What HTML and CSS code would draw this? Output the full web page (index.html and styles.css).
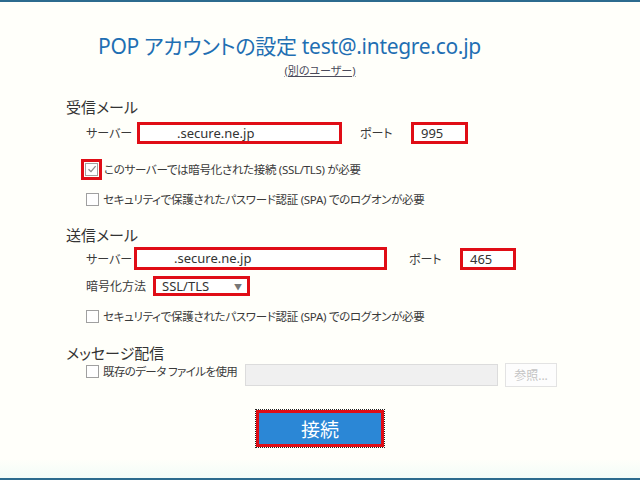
FILE: index.html
```html
<!DOCTYPE html>
<html lang="ja">
<head>
  <meta charset="UTF-8" />
  <title>POP アカウントの設定</title>
  <link rel="stylesheet" href="styles.css">
</head>
<body>

<div class="dialog">
  <h1 class="title">POP アカウントの設定 test@.integre.co.jp</h1>
  <p class="other"><a href="#">(別のユーザー)</a></p>

  <h2 class="group">受信メール</h2>
  <div class="row row-server">
    <span class="label label-server">サーバー</span>
    <div class="box box-in">.secure.ne.jp</div>
    <span class="label label-port">ポート</span>
    <div class="box port port-in">995</div>
  </div>
  <div class="check-row check-first">
    <span class="mark-wrap"><span class="check checked">
      <svg width="10" height="10" viewBox="0 0 10 10"><path d="M1.5 5.2 L4 7.6 L8.6 2.2" fill="none" stroke="#8a8a8a" stroke-width="1.3"/></svg>
    </span></span>
    <span class="check-text">このサーバーでは暗号化された接続 (SSL/TLS) が必要</span>
  </div>
  <div class="check-row">
    <span class="check"></span>
    <span class="check-text">セキュリティで保護されたパスワード認証 (SPA) でのログオンが必要</span>
  </div>

  <h2 class="group group-out">送信メール</h2>
  <div class="row row-server row-out">
    <span class="label label-server2">サーバー</span>
    <div class="box box-out">.secure.ne.jp</div>
    <span class="label label-port">ポート</span>
    <div class="box port port-out">465</div>
  </div>
  <div class="row row-enc">
    <span class="label label-enc">暗号化方法</span>
    <div class="select">SSL/TLS <span class="arrow">▼</span></div>
  </div>
  <div class="check-row check-out">
    <span class="check"></span>
    <span class="check-text">セキュリティで保護されたパスワード認証 (SPA) でのログオンが必要</span>
  </div>

  <h2 class="group group-msg">メッセージ配信</h2>
  <div class="row row-file">
    <span class="check"></span>
    <span class="check-text file-text">既存のデータ ファイルを使用</span>
    <div class="file-input"></div>
    <div class="browse">参照...</div>
  </div>

  <div class="actions">
    <button class="connect">接続</button>
  </div>
</div>

</body>
</html>
```

FILE: styles.css
```css
body {
  margin: 0;
  background: #fffffa;
  font-family: "Noto Sans", "Noto Sans CJK JP", sans-serif;
  font-feature-settings: "palt";
  color: #3a3a3a;
  font-size: 12px;
}
.dialog {
  height: 476px;
  border-top: 2px solid #2c6b8e;
  border-bottom: 2px solid #2c6b8e;
  background: linear-gradient(#fffffa 0, #fffffa 96%, #f2fcf8 100%);
  padding-left: 66px;
  box-sizing: content-box;
}
.title {
  margin: 0;
  padding-top: 31px;
  padding-left: 32px;
  font-size: 21px;
  font-weight: normal;
  line-height: 26px;
  color: #1f6fb3;
  letter-spacing: -0.3px;
}
.other {
  margin: 0;
  margin-top: 4px;
  margin-left: -66px;
  text-align: center;
  line-height: 16px;
  font-size: 11px;
}
.other a {
  color: #4a4a5a;
}
.group {
  margin: 0;
  font-size: 15px;
  font-weight: normal;
  line-height: 20px;
  color: #333;
}
h2.group { margin-top: 18px; }
h2.group-out { margin-top: 15px; }
h2.group-msg { margin-top: 16px; }
.row {
  display: flex;
  align-items: center;
  padding-left: 20px;
}
.row-server {
  height: 23px;
  margin-top: 4px;
}
.row-server.row-out {
  margin-top: 2px;
}
.label {
  font-size: 12px;
}
.label-server { width: 51px; }
.label-server2 { width: 48px; }
.label-port { margin-left: 18px; width: 51px; }
.label-enc { width: 67px; }
.box {
  height: 22px;
  box-sizing: border-box;
  border: 3px solid #e00d16;
  background: #fff;
  font-size: 13px;
  line-height: 16px;
  color: #333;
  padding-left: 37px;
}
.box-in { width: 205px; }
.box-out { width: 253px; height: 23px; margin-right: 4px; }
.port { padding-left: 7px; }
.port-in { width: 57px; }
.port-out { width: 56px; }
.check-row {
  display: flex;
  align-items: center;
  padding-left: 20px;
  height: 22px;
  margin-top: 8px;
}
.check-first {
  margin-top: 14px;
}
.check-out {
  margin-top: 9px;
}
.check {
  width: 11px;
  height: 11px;
  border: 1px solid #a0a0a0;
  background: #fff;
  display: flex;
  align-items: center;
  justify-content: center;
  flex: none;
}
.mark-wrap {
  border: 3px solid #e00d16;
  padding: 1px;
  margin-left: -5px;
  margin-right: -2px;
  display: flex;
}
.check-text {
  margin-left: 4px;
  font-size: 11.5px;
  letter-spacing: -0.3px;
  white-space: nowrap;
}
.row-enc {
  height: 20px;
  margin-top: 6px;
}
.select {
  width: 97px;
  height: 20px;
  box-sizing: border-box;
  border: 3px solid #e00d16;
  background: #fff;
  display: flex;
  align-items: center;
  padding-left: 6px;
  font-size: 13px;
  color: #333;
}
.arrow {
  margin-left: auto;
  margin-right: 5px;
  font-size: 8px;
  color: #777;
}
.row-file {
  height: 24px;
  margin-top: 0;
}
.row-file .check { align-self: flex-start; margin-top: 2px; }
.file-text {
  align-self: flex-start;
  width: 133px;
  flex: none;
  letter-spacing: -0.6px;
}
.file-input {
  width: 253px;
  height: 22px;
  margin-left: 9px;
  background: #f0f0f0;
  border: 1px solid #dcdcdc;
  box-sizing: border-box;
}
.browse {
  width: 52px;
  height: 24px;
  margin-left: 7px;
  border: 1px solid #e3e3e3;
  box-sizing: border-box;
  background: #fdfdfd;
  color: #c4c4c4;
  font-size: 12px;
  display: flex;
  align-items: center;
  justify-content: center;
}
.actions {
  margin-left: -66px;
  margin-top: 23px;
  display: flex;
  justify-content: center;
}
.connect {
  width: 128px;
  height: 37px;
  box-sizing: border-box;
  border: 3px solid #e00d16;
  outline: 1px dotted #222;
  background: #2b87d6;
  color: #fff;
  font-family: "Noto Sans CJK JP", sans-serif;
  font-size: 19px;
  padding: 0;
}
```
